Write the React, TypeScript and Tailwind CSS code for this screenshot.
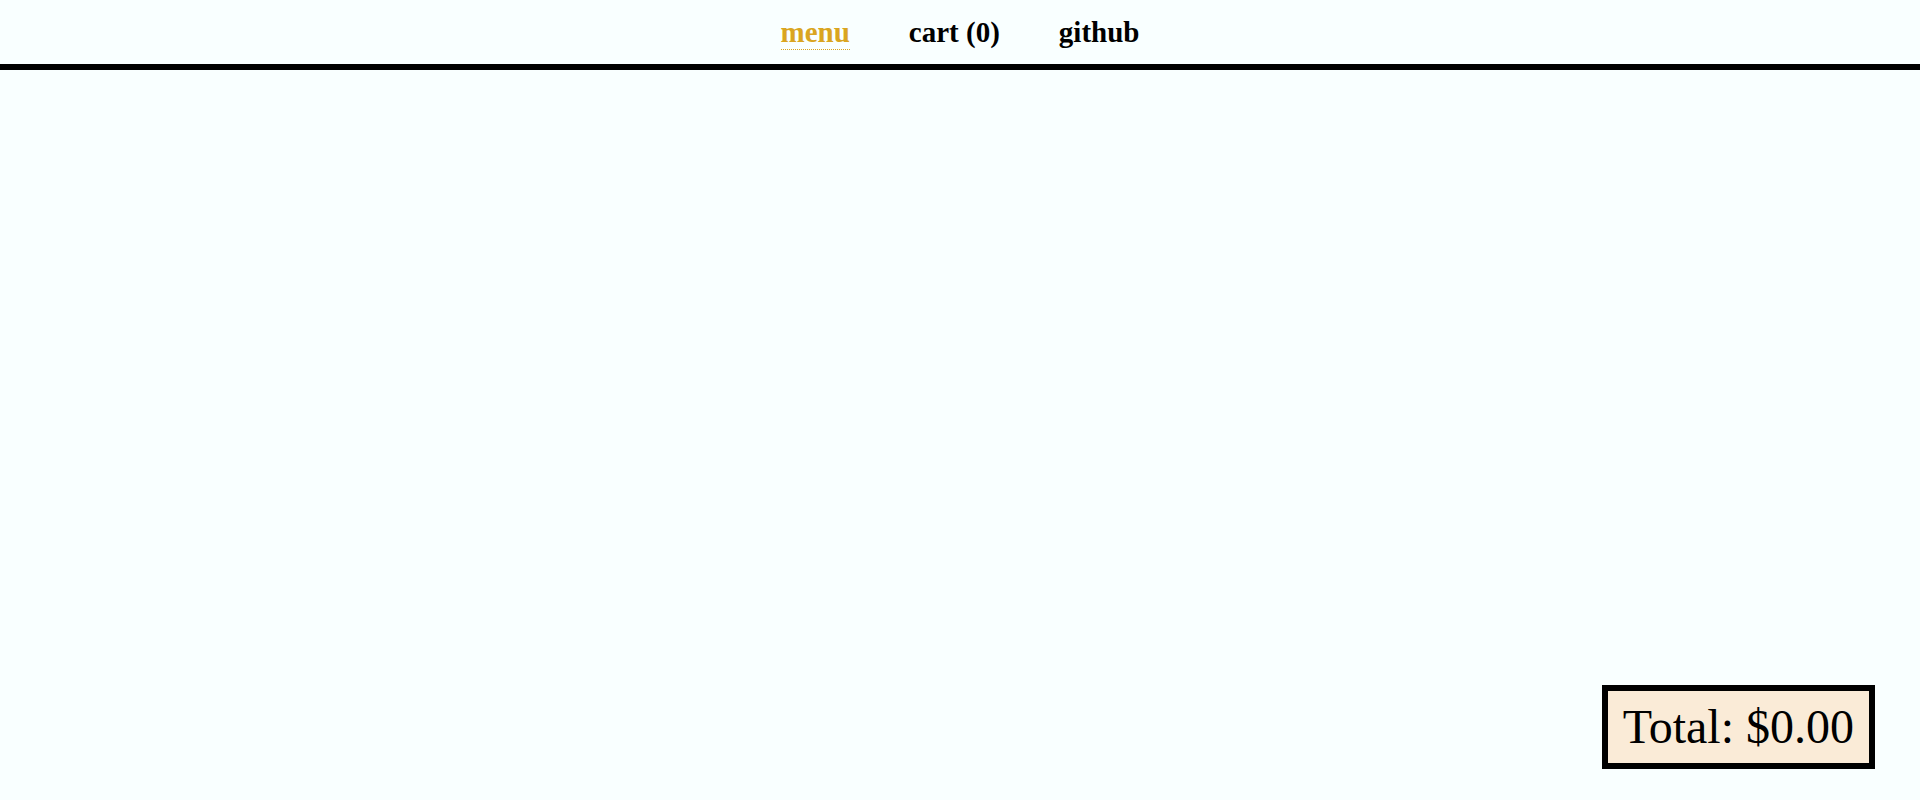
import React from "react";

export default function App() {
  return (
    <div
      className="min-h-[800px] flex flex-col bg-[#f9ffff] text-black"
      style={{ fontFamily: '"Liberation Serif", "Times New Roman", serif' }}
    >
      <header className="border-b-[6px] border-black pt-[16px] pb-[14px]">
        <nav className="flex justify-center gap-[59px] text-[29px] font-bold leading-[33px]">
          <a href="#" className="text-[#daa520] border-b border-dotted border-[#daa520]">
            menu
          </a>
          <a href="#">cart (0)</a>
          <a href="#">github</a>
        </nav>
      </header>
      <main className="flex-1 flex items-end justify-end pr-[45px] pb-[31px]">
        <div className="border-[6px] border-black bg-[#faebd7] px-[15px] py-[8px] text-[48px] leading-[56px]">
          Total: $0.00
        </div>
      </main>
    </div>
  );
}
